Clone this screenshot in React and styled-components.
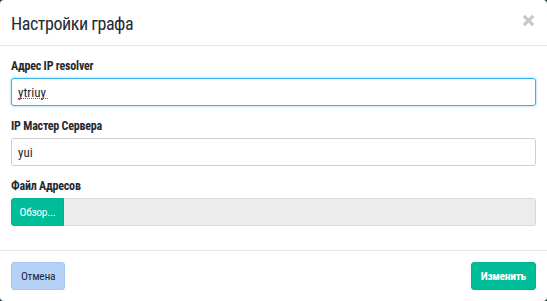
import React from "react";
import styled, { createGlobalStyle } from "styled-components";

const Global = createGlobalStyle`
  html, body { margin: 0; padding: 0; background: #16322f; }
  body { font-family: "Roboto Condensed", "Roboto", sans-serif; font-stretch: 75%; }
  * { box-sizing: border-box; }
`;

const Modal = styled.div`
  width: 547px;
  height: 301px;
  background: #fff;
  border-radius: 4px;
  display: flex;
  flex-direction: column;
  overflow: hidden;
`;

const Header = styled.div`
  height: 46px;
  padding: 0 12px 0 11px;
  border-bottom: 1px solid #e5e5e5;
  display: flex;
  align-items: center;
  justify-content: space-between;
`;

const Title = styled.h4`
  margin: 0;
  font-size: 18px;
  font-weight: 400;
  letter-spacing: -0.45px;
  color: #1f2a33;
  line-height: 22px;
  padding-top: 2px;
`;

const Close = styled.svg`
  width: 13px;
  height: 13px;
  margin-top: -5px;
  display: block;
`;

const Body = styled.div`
  padding: 13px 11px 0;
  flex: 1;
  display: flex;
  flex-direction: column;
  gap: 13px;
`;

const Group = styled.div`
  display: flex;
  flex-direction: column;
  gap: 4px;
`;

const Label = styled.label`
  font-size: 12px;
  font-weight: 700;
  letter-spacing: -0.2px;
  line-height: 15px;
  color: #1f2a33;
`;

const Field = styled.div`
  position: relative;
`;

const Input = styled.input`
  display: block;
  height: 28px;
  width: 100%;
  border: 1px solid ${p => (p.$focus ? "#3bb0ec" : "#cfcfcf")};
  border-radius: 3px;
  box-shadow: ${p => (p.$focus ? "0 0 3px rgba(59,176,236,0.6)" : "none")};
  padding: 0 6px;
  font-family: inherit;
  font-stretch: 75%;
  font-size: 13px;
  color: #1f2a33;
  outline: none;
`;

const Squiggle = styled.span`
  position: absolute;
  left: 7px;
  top: 20px;
  width: 30px;
  height: 0;
  border-bottom: 1px dotted #e0362c;
  pointer-events: none;
`;

const FileRow = styled.div`
  display: flex;
  height: 28px;
`;

const Browse = styled.span`
  width: 53px;
  background: #00bd9a;
  color: #fff;
  border: 1px solid #00b08f;
  border-radius: 3px 0 0 3px;
  font-size: 11.5px;
  letter-spacing: -0.3px;
  display: flex;
  align-items: center;
  justify-content: center;
`;

const FileField = styled.div`
  flex: 1;
  background: #ececec;
  border: 1px solid #d9d9d9;
  border-left: none;
  border-radius: 0 3px 3px 0;
`;

const Footer = styled.div`
  border-top: 1px solid #e5e5e5;
  padding: 11px;
  display: flex;
  justify-content: space-between;
`;

const Button = styled.button`
  height: 28px;
  padding: 0 ${p => (p.$primary ? 9 : 9)}px;
  border-radius: 3px;
  font-family: inherit;
  font-stretch: 75%;
  font-size: 11.5px;
  letter-spacing: -0.3px;
  border: 1px solid ${p => (p.$primary ? "#00b08f" : "#a8c5ef")};
  background: ${p => (p.$primary ? "#00bd9a" : "#b5d1f6")};
  color: ${p => (p.$primary ? "#fff" : "#1f2a33")};
  font-weight: ${p => (p.$primary ? 700 : 400)};
`;

export default function App() {
  return (
    <>
      <Global />
      <Modal>
        <Header>
          <Title>Настройки графа</Title>
          <Close viewBox="0 0 13 13">
            <path d="M1.8 1.8 L11.2 11.2 M11.2 1.8 L1.8 11.2" stroke="#c8c8c8" strokeWidth="3.2" />
          </Close>
        </Header>
        <Body>
          <Group>
            <Label>Адрес IP resolver</Label>
            <Field>
              <Input $focus defaultValue="ytriuy" />
              <Squiggle />
            </Field>
          </Group>
          <Group>
            <Label>IP Мастер Сервера</Label>
            <Field>
              <Input defaultValue="yui" />
            </Field>
          </Group>
          <Group>
            <Label>Файл Адресов</Label>
            <FileRow>
              <Browse>Обзор...</Browse>
              <FileField />
            </FileRow>
          </Group>
        </Body>
        <Footer>
          <Button>Отмена</Button>
          <Button $primary>Изменить</Button>
        </Footer>
      </Modal>
    </>
  );
}
